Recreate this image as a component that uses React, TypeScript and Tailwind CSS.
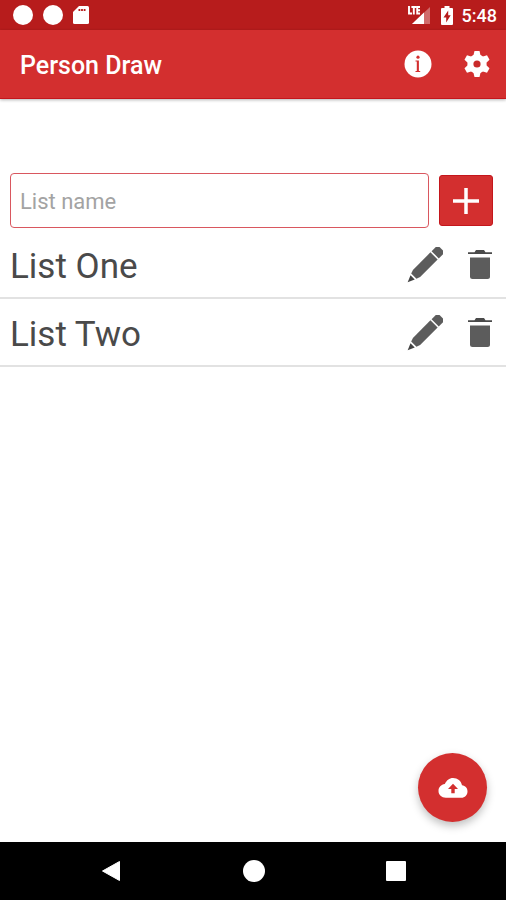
import { useState } from "react";

function StatusBar() {
  return (
    <div className="flex h-[30px] items-center justify-between bg-[#b71c1c] pr-[9px] pl-[13px] text-white">
      <div className="flex items-center gap-[10px]">
        <span className="size-5 rounded-full bg-white" />
        <span className="size-5 rounded-full bg-white" />
        <svg viewBox="0 0 16 20" className="h-5 w-4" aria-hidden="true">
          <path
            fill="#fff"
            d="M6 1h8.5Q16 1 16 2.5v15Q16 19 14.5 19h-13Q0 19 0 17.5V7z"
          />
          <path fill="#b71c1c" d="M5.500 4h1.800v2H5.500zM8.100 4h1.800v2H8.100zM10.700 4h1.800v2h-1.800z" />
        </svg>
      </div>
      <div className="flex items-center">
        <svg viewBox="0 0 22 20" className="h-5 w-[22px]" aria-hidden="true">
          <path fill="#fff" fillOpacity="0.35" d="M22 2v17H4z" />
          <path fill="#fff" d="M16 7.600V19H4z" />
          <path fill="#b71c1c" d="M0 0h13v10H0z" />
          <path
            fill="none"
            stroke="#fff"
            strokeWidth="1.900"
            d="M1 1v7.500h3M3.400 2h4.800M5.800 2v7.500M12 2H9.200v6.500H12M9.200 5.200H12"
          />
        </svg>
        <svg viewBox="0 0 12 19" className="ml-[11px] h-[19px] w-3" aria-hidden="true">
          <path fill="#fff" d="M3.500 0h5v2H11q1 0 1 1v15q0 1-1 1H1q-1 0-1-1V3q0-1 1-1h2.500z" />
          <path fill="#b71c1c" d="M7.200 4.500L2.500 11.500h2.700v5l4.500-7.200H7.200z" />
        </svg>
        <span className="ml-[9px] pt-px text-lg leading-[30px] font-medium">5:48</span>
      </div>
    </div>
  );
}

function InfoIcon() {
  return (
    <svg viewBox="0 0 28 28" className="size-7" aria-hidden="true">
      <circle cx="14" cy="14" r="13.500" fill="#fff" />
      <circle cx="14" cy="7.200" r="1.600" fill="#d32f2f" />
      <path fill="#d32f2f" d="M11.500 10.600h3.400v10.400h1.300v1h-4.700v-1h1.300v-9.400h-1.300z" />
    </svg>
  );
}

function GearIcon() {
  return (
    <svg viewBox="0 0 28 28" className="size-7" aria-hidden="true">
      <g fill="#fff">
        <circle cx="14" cy="14" r="9.700" />
        <path id="teeth" d="M11.500 1h5l1.200 5v16l-1.200 5h-5l-1.200-5V6z" />
        <use href="#teeth" transform="rotate(60 14 14)" />
        <use href="#teeth" transform="rotate(120 14 14)" />
      </g>
      <circle cx="14" cy="14" r="3.600" fill="#c92a2a" />
    </svg>
  );
}

function CloudUploadIcon() {
  return (
    <svg viewBox="0 0 30 20" className="h-5 w-[30px]" aria-hidden="true">
      <path
        fill="#fff"
        d="M15 0c4.600 0 8.200 3 9 7.300 3.300.3 5.500 2.900 5.500 6.100 0 3.600-2.700 6.300-6.200 6.300H7.800C3.600 19.700.5 16.800.5 13c0-3.700 2.700-6.500 6.300-6.900C8.400 2.500 11.300 0 15 0z"
      />
      <path fill="#d32f2f" d="M15 5.800l5 5.200h-3.300v4.300h-3.400V11H10z" />
    </svg>
  );
}

function PencilIcon() {
  return (
    <svg viewBox="0 0 36 36" className="size-9" aria-hidden="true">
      <g transform="rotate(-45 18 18)" fill="#5c5c5c">
        <path fill="#444" d="M-6.500 18l7-3v6z" />
        <path d="M2.200 14.300L6 12.900h24.800v10.200H6l-3.800-1.400z" />
        <path d="M32.400 12.900h5.600q3 0 3 3v4.200q0 3-3 3h-5.600z" />
      </g>
    </svg>
  );
}

function TrashIcon() {
  return (
    <svg viewBox="0 0 26 30" className="h-[30px] w-[26px]" aria-hidden="true">
      <path fill="#4a4a4a" d="M9 0h8l1.500 2.200h6.500V4H1V2.200h6.500z" />
      <path fill="#5c5c5c" d="M3 7.500h20v19q0 2.500-2.500 2.500h-15Q3 29 3 26.500z" />
    </svg>
  );
}

function ListRow({ name }: { name: string }) {
  return (
    <li className="flex h-[68px] items-center border-b-2 border-[#e2e2e2] pt-[2px] pr-[13px] pl-[10px]">
      <span className="flex-1 pt-1 text-[35px] leading-10 text-[#4a4a4a]">{name}</span>
      <button type="button" aria-label={`Edit ${name}`}>
        <PencilIcon />
      </button>
      <button type="button" aria-label={`Delete ${name}`} className="ml-6">
        <TrashIcon />
      </button>
    </li>
  );
}

export default function App() {
  const [lists, setLists] = useState(["List One", "List Two"]);
  const [name, setName] = useState("");

  const addList = () => {
    if (!name.trim()) return;
    setLists([...lists, name.trim()]);
    setName("");
  };

  return (
    <div className="flex min-h-screen flex-col bg-white font-[Roboto,sans-serif]">
      <StatusBar />
      <header className="flex h-[69px] items-center border-b border-[#c4161c] bg-[#d32f2f] pr-[15px] pl-5 text-white shadow-[0_1px_3px_rgba(0,0,0,0.3)]">
        <h1 className="flex-1 pt-1 text-[25px] leading-8 font-medium">Person Draw</h1>
        <button type="button" aria-label="Info">
          <InfoIcon />
        </button>
        <button type="button" aria-label="Settings" className="ml-[31px]">
          <GearIcon />
        </button>
      </header>

      <main className="relative flex-1 pt-[74px]">
        <form
          className="flex items-center gap-[10px] pr-[13px] pl-[10px]"
          onSubmit={(e) => {
            e.preventDefault();
            addList();
          }}
        >
          <input
            type="text"
            aria-label="List name"
            placeholder="List name"
            value={name}
            onChange={(e) => setName(e.target.value)}
            className="h-[55px] min-w-0 flex-1 rounded-[4px] border border-[#d9575f] px-[9px] pt-[2px] text-[22px] text-[#4a4a4a] outline-none placeholder:text-[#a3a3a3]"
          />
          <button
            type="submit"
            aria-label="Add list"
            className="flex h-[51px] w-[54px] items-center justify-center rounded-[3px] border border-[#c4161c] bg-[#d32f2f]"
          >
            <svg viewBox="0 0 26 26" className="size-[26px]" aria-hidden="true">
              <path stroke="#fff" strokeWidth="3.500" d="M13 0v26M0 13h26" />
            </svg>
          </button>
        </form>

        <ul className="mt-[3px]">
          {lists.map((list) => (
            <ListRow key={list} name={list} />
          ))}
        </ul>

        <button
          type="button"
          aria-label="Upload"
          className="absolute right-[19px] bottom-5 flex size-[69px] items-center justify-center rounded-full bg-[#d32f2f] text-white shadow-[0_4px_8px_rgba(0,0,0,0.25)]"
        >
          <CloudUploadIcon />
        </button>
      </main>

      <nav className="flex h-[58px] items-center justify-center gap-[121px] bg-black">
        <button type="button" aria-label="Back">
          <svg viewBox="0 0 22 22" className="size-[22px]" aria-hidden="true">
            <path fill="#fff" stroke="#fff" strokeLinejoin="round" d="M2.500 11L19.500 1.500v19z" />
          </svg>
        </button>
        <button type="button" aria-label="Home" className="size-[22px] rounded-full bg-white" />
        <button type="button" aria-label="Recent apps" className="size-5 rounded-[1px] bg-white" />
      </nav>
    </div>
  );
}
